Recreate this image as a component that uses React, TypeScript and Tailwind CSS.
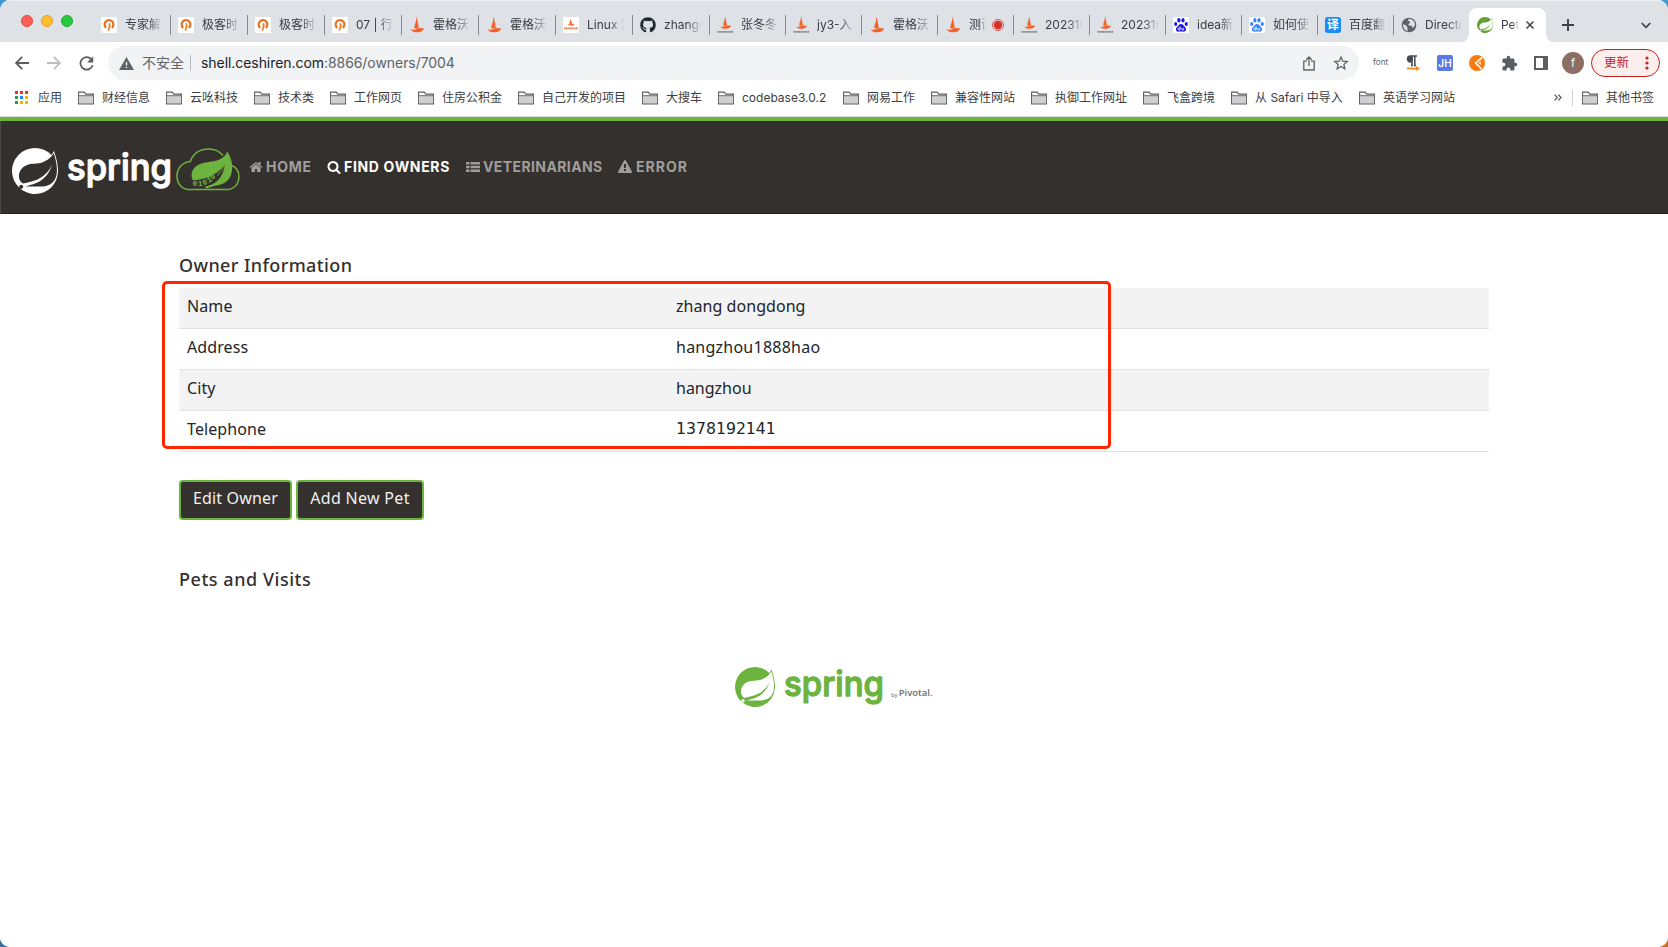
import React from 'react';
import { FaGithub } from 'react-icons/fa';
import { SiSpring } from 'react-icons/si';

const UI = "font-[Inter,'Noto_Sans_CJK_SC',sans-serif]";

/* ---------- favicons ---------- */

const GeekIcon = () => (
  <svg width="16" height="16" viewBox="0 0 16 16">
    <rect width="16" height="16" fill="#fff" />
    <path d="M5.200 10.900A4.400 4.400 0 1 1 10.800 10.900" fill="none" stroke="#ea6f1c" strokeWidth="2.200" />
    <path d="M7.600 6.200h1.900v4L8 13.800 6.400 13.200l1.200-2.600z" fill="#f07d22" />
  </svg>
);

const Ship = ({ caption = false }: { caption?: boolean }) => (
  <svg width="16" height="16" viewBox="0 0 16 16">
    <g transform={caption ? 'translate(2 -0.6) scale(.8)' : 'translate(0 -0.2)'}>
      <path d="M7.300.8C7.400 3.500 6.900 5.200 6 7.400c-.6 1.500-.9 3.100-.5 4.400l4.300-.1C9.800 8.500 8.800 6.500 8 .6z" fill="#f2622c" />
      <path d="M1.500 12.600c4 1 5-.2 8.200-1.200 1.800-.4 3.800.2 5.400.4-.8 2.200-3 3.600-6.200 3.700-3.600.1-6-.9-7.400-2.900z" fill="#f2622c" />
    </g>
    {caption && <path d="M.5 14.900h15.500" stroke="#777d84" strokeWidth="1.600" strokeDasharray="1.300 .5" />}
  </svg>
);

const LinuxShip = () => (
  <svg width="16" height="16" viewBox="0 0 16 16">
    <rect width="16" height="16" fill="#fff" />
    <path d="M7.500 2 6.300 7h3zM4.500 7.200c2 .6 4-.6 7 .1-1 1.700-5.500 2-7-.1z" fill="#f2622c" />
    <path d="M1 11.300h14" stroke="#f0764a" strokeWidth="1.800" strokeDasharray="1.400 .3" />
  </svg>
);

const Paw = ({ color }: { color: string }) => (
  <svg width="16" height="16" viewBox="0 0 16 16">
    <rect width="16" height="16" rx="1.500" fill="#fff" />
    <g fill={color}>
      <ellipse cx="2.700" cy="7" rx="1.600" ry="2.100" />
      <ellipse cx="5.900" cy="3.300" rx="1.600" ry="2.200" />
      <ellipse cx="10" cy="3.300" rx="1.600" ry="2.200" />
      <ellipse cx="13.300" cy="7" rx="1.600" ry="2.100" />
      <path d="M8 7c1.900 0 2.600 1.900 4 3.100 1.700 1.500 1.300 4.700-1.300 4.700-1 0-1.700-.2-2.700-.2s-1.800.2-2.800.2c-2.500 0-3-3.200-1.200-4.700C5.500 8.900 6.200 7 8 7z" />
    </g>
    <path d="M7.200 9.500v3.400H5.900a.9.900 0 0 1 0-2h1.300M8.800 10.900v1.400c0 .500.300.700.700.700h1.100v-2.100" fill="none" stroke="#fff" strokeWidth=".8" />
  </svg>
);

const Translate = () => (
  <span className="flex h-4 w-4 items-center justify-center rounded-[3px] bg-[#1889f7] text-[12px] leading-none font-bold text-white">
    译
  </span>
);

const Globe = () => (
  <svg width="16" height="16" viewBox="0 0 24 24">
    <circle cx="12" cy="12" r="11" fill="#5f6368" />
    <path
      d="M3 11c2 .2 3.500 1 5 2.500 1.500 1.200 2 2 1.500 3.500-.3 1.500.5 2.500 1 4.300C6 20.500 2.800 16.500 3 11zM11 3.200c-.5 2 .2 3 2 3.600 1.500.7 1 2.200-.5 3-1.300.6-1.600 1.600-.8 2.500 1 .9 2.800.4 4.500 1.200 1.500.8 1 2.500.3 3.500 3-1.200 4.800-4 4.300-7.200-.8-3.500-4.600-7.400-9.800-6.600z"
      fill="#dee1e6"
    />
  </svg>
);

/* ---------- tab strip ---------- */

type Tab = { title: string; icon: React.ReactNode; rec?: boolean };

const WIDE_TABS: Tab[] = [
  { title: '专家解', icon: <GeekIcon /> },
  { title: '极客时', icon: <GeekIcon /> },
  { title: '极客时', icon: <GeekIcon /> },
  { title: '07 | 行', icon: <GeekIcon /> },
  { title: '霍格沃', icon: <Ship /> },
  { title: '霍格沃', icon: <Ship /> },
  { title: 'Linux 常', icon: <LinuxShip /> },
  { title: 'zhangd', icon: <FaGithub size={16} color="#24292f" /> },
];

const NARROW_TABS: Tab[] = [
  { title: '张冬冬', icon: <Ship caption /> },
  { title: 'jy3-入', icon: <Ship caption /> },
  { title: '霍格沃', icon: <Ship /> },
  { title: '测试', icon: <Ship />, rec: true },
  { title: '202310', icon: <Ship caption /> },
  { title: '202310', icon: <Ship caption /> },
  { title: 'idea新', icon: <Paw color="#2319dc" /> },
  { title: '如何使', icon: <Paw color="#3385ff" /> },
  { title: '百度翻', icon: <Translate /> },
];

const LAST_TAB: Tab = { title: 'Directo', icon: <Globe /> };

const TabCell = ({ tab, className, sep = true }: { tab: Tab; className: string; sep?: boolean }) => (
  <div className={`flex h-full shrink-0 items-center pl-[7px] ${className}`}>
    <span className="flex h-4 w-4 shrink-0">{tab.icon}</span>
    <span
      className={`ml-2 overflow-hidden text-[12px] leading-5 whitespace-nowrap [mask-image:linear-gradient(to_right,black_62%,transparent_102%)] ${
        tab.rec ? 'w-[17px]' : 'w-[37px]'
      }`}
    >
      {tab.title}
    </span>
    {tab.rec && (
      <svg width="12" height="12" viewBox="0 0 12 12" className="ml-[6px] shrink-0">
        <circle cx="6" cy="6" r="4.200" fill="#d93025" />
        <circle cx="6" cy="6" r="5.500" fill="none" stroke="#d93025" strokeWidth=".8" />
      </svg>
    )}
    {sep && <span className="ml-auto h-5 w-px bg-[#85888d]" />}
  </div>
);

const TabStrip = () => (
  <div className="flex h-[42px] items-end border-t border-[#eceef1] bg-[#dee1e6] text-[#3c4043]">
    <div className="flex h-[41px] w-[94px] shrink-0 gap-2 pt-[14px] pl-[21px]">
      <span className="h-3 w-3 rounded-full border border-[#e2463d] bg-[#fe5f57]" />
      <span className="h-3 w-3 rounded-full border border-[#e0a024] bg-[#febc2e]" />
      <span className="h-3 w-3 rounded-full border border-[#1aad2e] bg-[#28c840]" />
    </div>
    <div className="flex h-[34px] shrink-0">
      {WIDE_TABS.map((t, i) => (
        <TabCell key={i} tab={t} className="w-[77px]" />
      ))}
      {NARROW_TABS.map((t, i) => (
        <TabCell key={i} tab={t} className="w-[76px]" />
      ))}
      <TabCell tab={LAST_TAB} className="w-[75px]" sep={false} />
      <div className="relative flex w-[77px] items-center rounded-t-[8px] bg-white pl-2">
        <svg width="8" height="8" className="absolute bottom-0 -left-2">
          <path d="M8 0v8H0a8 8 0 0 0 8-8z" fill="#fff" />
        </svg>
        <svg width="8" height="8" className="absolute -right-2 bottom-0">
          <path d="M0 0v8h8a8 8 0 0 1-8-8z" fill="#fff" />
        </svg>
        <SiSpring size={16} color="#5fa134" />
        <span className="ml-2 w-[18px] overflow-hidden text-[12px] leading-5 whitespace-nowrap [mask-image:linear-gradient(to_right,black_60%,transparent_102%)]">
          Pet
        </span>
        <svg width="8" height="8" viewBox="0 0 8 8" className="ml-[7px]">
          <path d="M.5.5l7 7m0-7l-7 7" stroke="#3c4043" strokeWidth="1.500" />
        </svg>
      </div>
      <div className="flex flex-1 items-center">
        <svg width="12" height="12" viewBox="0 0 12 12" className="ml-4">
          <path d="M6 0v12M0 6h12" stroke="#3c4043" strokeWidth="1.900" />
        </svg>
      </div>
    </div>
    <div className="flex h-[34px] flex-1 items-center justify-end pr-[17px]">
      <svg width="10" height="7" viewBox="0 0 10 7">
        <path d="M.700 1l4.300 4.300L9.300 1" fill="none" stroke="#3c4043" strokeWidth="1.700" />
      </svg>
    </div>
  </div>
);

/* ---------- address bar ---------- */

const AddressBar = () => (
  <div className="flex h-[42px] items-center bg-white pr-[7px] text-[#5f6368]">
    <svg width="14" height="14" viewBox="0 0 14 14" className="ml-[15px] shrink-0">
      <path d="M14 7H1.500M7.200.8L1 7l6.200 6.200" fill="none" stroke="#5a5e63" strokeWidth="1.800" />
    </svg>
    <svg width="14" height="14" viewBox="0 0 14 14" className="ml-[18px] shrink-0">
      <path d="M0 7h12.500M6.800.8L13 7l-6.200 6.200" fill="none" stroke="#bdbfc2" strokeWidth="1.800" />
    </svg>
    <svg width="15" height="15" viewBox="0 0 15 15" className="ml-[18px] shrink-0">
      <path d="M12.300 3.200A6.200 6.200 0 1 0 13.600 9.200" fill="none" stroke="#5a5e63" strokeWidth="1.800" />
      <path d="M14.200.300v6.200H8z" fill="#5a5e63" />
    </svg>

    <div className="ml-[14px] flex h-[34px] w-[1251px] shrink-0 items-center rounded-full bg-[#f1f3f4] pr-[10px] pl-[11px]">
      <svg width="15" height="13" viewBox="0 0 15 13">
        <path d="M7.500 0L15 13H0z" fill="#5f6368" />
        <path d="M6.800 5h1.400v3.500H6.800zM6.800 9.700h1.400v1.400H6.800z" fill="#f1f3f4" />
      </svg>
      <span className="ml-2 text-[14px] leading-5">不安全</span>
      <span className="ml-[6px] h-4 w-px bg-[#b6b8bb]" />
      <span className="ml-[10px] text-[14px] leading-5 tracking-[-0.060px]">
        <span className="text-[#202124]">shell.ceshiren.com</span>:8866/owners/7004
      </span>
      <svg width="12" height="15" viewBox="0 0 12 15" className="ml-auto">
        <path d="M4 5.200H.8v8.800h10.400V5.200H8M6 10V1.300M3.200 3.800L6 1l2.800 2.800" fill="none" stroke="#5f6368" strokeWidth="1.300" />
      </svg>
      <svg width="16" height="16" viewBox="0 0 24 24" className="ml-[18px]">
        <path
          d="M12 3l2.700 6.200 6.700.600-5.100 4.400 1.500 6.600L12 17.300l-5.800 3.500 1.500-6.600L2.600 9.800l6.700-.600z"
          fill="none"
          stroke="#5f6368"
          strokeWidth="1.900"
        />
      </svg>
    </div>

    <div className="ml-[14px] flex flex-1 items-center">
      <span className="w-4 shrink-0 -translate-y-px text-[8.200px] leading-3">font</span>
      <svg width="14" height="16" viewBox="0 0 14 16" className="ml-[17px] shrink-0">
        <path d="M11 1H4.500a3 3 0 0 0 0 6H6v4M6 1v10M8.800 1v10M5 10.600h2M8 10.600h2" fill="none" stroke="#454a54" strokeWidth="1.500" />
        <circle cx="4.300" cy="4" r="2.800" fill="#454a54" />
        <path d="M1 13.500h9.500" stroke="#f5871f" strokeWidth="1.800" />
        <path d="M10 11l4 2.500-4 2.500z" fill="#f5871f" />
      </svg>
      <span className="ml-[17px] flex h-4 w-4 shrink-0 items-center justify-center rounded-[2px] bg-[#5b78e5] text-[10px] leading-none font-semibold text-white">
        JH
      </span>
      <svg width="16" height="16" viewBox="0 0 16 16" className="ml-4 shrink-0">
        <circle cx="8" cy="8" r="8" fill="#fd7a10" />
        <path d="M13.300 2.400L6.600 8l5.800 5.700" fill="none" stroke="#fff" strokeWidth="1.600" />
        <path d="M11.700 6v4L9.500 8z" fill="#fff" />
      </svg>
      <svg width="17" height="17" viewBox="0 0 24 24" className="ml-[16px] shrink-0">
        <path
          d="M20.500 11H19V7a2 2 0 0 0-2-2h-4V3.500a2.500 2.500 0 0 0-5 0V5H4a2 2 0 0 0-2 2v3.800h1.500a2.700 2.700 0 0 1 0 5.400H2V20a2 2 0 0 0 2 2h3.800v-1.500a2.700 2.700 0 0 1 5.400 0V22H17a2 2 0 0 0 2-2v-4h1.500a2.500 2.500 0 0 0 0-5z"
          fill="#5a5e63"
        />
      </svg>
      <svg width="14" height="14" viewBox="0 0 14 14" className="ml-4 shrink-0">
        <path d="M1 1h12v12H1z" fill="none" stroke="#5a5e63" strokeWidth="2" />
        <path d="M9 1h4v12H9z" fill="#5a5e63" />
      </svg>
      <span className="ml-[14px] flex h-[22px] w-[22px] shrink-0 items-center justify-center rounded-full bg-[#8d6e63] text-[11px] leading-none text-white">
        f
      </span>
      <div className="ml-[7px] flex h-[28px] w-[69px] shrink-0 items-center rounded-full border border-[#c5221f] bg-[#fceeed] pl-3 text-[12.500px] text-[#c5221f]">
        更新
        <svg width="4" height="14" viewBox="0 0 4 14" className="ml-[16px]">
          <g fill="#c5221f">
            <circle cx="2" cy="2" r="1.600" />
            <circle cx="2" cy="7" r="1.600" />
            <circle cx="2" cy="12" r="1.600" />
          </g>
        </svg>
      </div>
    </div>
  </div>
);

/* ---------- bookmarks ---------- */

const Folder = () => (
  <svg width="16" height="14" viewBox="0 0 16 14" className="shrink-0">
    <path d="M.600 12.900V1.100h5.600l1.600 2h7.600v9.800z" fill="#fff" stroke="#5a5e63" strokeWidth="1.100" />
    <path d="M1.200 5h13.600v7.300H1.200z" fill="#cfcfcf" />
    <path d="M.6 4.700h14.800" stroke="#5a5e63" strokeWidth=".9" />
  </svg>
);

const BOOKMARKS: [string, string][] = [
  ['财经信息', 'w-[88px]'],
  ['云吆科技', 'w-[88px]'],
  ['技术类', 'w-[76px]'],
  ['工作网页', 'w-[88px]'],
  ['住房公积金', 'w-[100px]'],
  ['自己开发的项目', 'w-[124px]'],
  ['大搜车', 'w-[76px]'],
  ['codebase3.0.2', 'w-[125px]'],
  ['网易工作', 'w-[88px]'],
  ['兼容性网站', 'w-[100px]'],
  ['执御工作网址', 'w-[112px]'],
  ['飞盒跨境', 'w-[88px]'],
  ['从 Safari 中导入', 'w-[128px]'],
  ['英语学习网站', 'w-[112px]'],
];

const DOT_FILL = ['#e8352c', '#e8352c', '#e8352c', '#2c9b4e', '#1a86f8', '#f4b400', '#2c9b4e', '#f4b400', '#f4b400'];

const Bookmarks = () => (
  <div className="flex h-[32px] items-center bg-white pb-[5px] text-[12px] leading-4 text-[#3c4043]">
    <svg width="13" height="13" viewBox="0 0 13 13" className="ml-[15px] shrink-0">
      {DOT_FILL.map((fill, i) => (
        <rect key={i} x={(i % 3) * 5} y={Math.floor(i / 3) * 5} width="3" height="3" fill={fill} />
      ))}
    </svg>
    <span className="ml-[10px] w-[40px] shrink-0">应用</span>
    {BOOKMARKS.map(([name, w]) => (
      <span key={name} className={`flex shrink-0 items-center gap-2 whitespace-nowrap ${w}`}>
        <Folder />
        {name}
      </span>
    ))}
    <svg width="8" height="7" viewBox="0 0 8 7" className="ml-auto">
      <path d="M.6.600l2.700 2.900-2.700 2.900M4.400.600l2.700 2.900-2.700 2.900" fill="none" stroke="#5a5e63" strokeWidth="1.300" />
    </svg>
    <span className="ml-[10px] h-4 w-px bg-[#cdcfd2]" />
    <span className="ml-[9px] flex w-[86px] items-center gap-2">
      <Folder />
      其他书签
    </span>
  </div>
);

/* ---------- site header ---------- */

type WordmarkProps = { width: number; height: number; size: number; fill: string; base: number };

const Wordmark = ({ width, height, size, fill, base }: WordmarkProps) => (
  <svg width={width} height={height} className="shrink-0 overflow-visible">
    <text
      x="-1"
      y={base}
      textLength={width + 2}
      lengthAdjust="spacingAndGlyphs"
      fontFamily="Inter, sans-serif"
      fontWeight="500"
      fontSize={size}
      fill={fill}
      stroke={fill}
      strokeWidth="1.300"
      strokeLinejoin="round"
    >
      spring
    </text>
  </svg>
);

const CloudLogo = () => (
  <svg width="64" height="43" viewBox="0 0 64 43" className="ml-[5px] shrink-0">
    <path
      d="M14.200 41.600C5.500 41.600 1 35.800 1 27.800c0-8 5.600-13.600 13.300-14.400C17.200 5.600 24 .9 32.500.9c6.200 0 11.200 2.500 14.600 6.600M53.500 16.800c5.500 1.400 9.400 5.600 9.400 11.800 0 8.200-5.300 13-13.400 13H14.200"
      fill="none"
      stroke="#6db33f"
      strokeWidth="1.500"
    />
    <path
      d="M51.300 3.500c-2 5.300-6.200 8.100-12.600 9.500-6.700 1.400-12.200 1.400-17 4.200-5.900 3.400-7.300 9-5.200 14.600 1 1.600 2 2.200 4 1.900-1 1.800 3 3.800 9 4.200 10 1.200 21.700-.8 25.400-10.600 2.600-7.800 1.300-16.100-3.600-23.800z"
      fill="#6db33f"
    />
    <path d="M14 32.500C28 32 40 28 48.800 17 47 30 40 36.500 28 39.500 22 41 14 40 14 32.500z" fill="#34302d" />
    <text
      fontFamily="'Liberation Mono', monospace"
      fontWeight="700"
      fontSize="8"
      fill="#6db33f"
      x="16.500 22 27.200 32.400 36.600"
      y="38.400 38.200 37.200 35 32"
      rotate="0 -6 -18 -32 -42"
    >
      01010
    </text>
    <path d="M41.500 27C44 24.600 46 22 47.600 19" fill="none" stroke="#6db33f" strokeWidth="2" strokeDasharray=".8 1.100" />
    <path d="M29.500 39.500C36 38.500 43 35 47 29" fill="none" stroke="#6db33f" strokeWidth="1.800" />
  </svg>
);

const Fa = ({ d }: { d: string }) => (
  <svg width="14" height="14" viewBox="0 0 1792 1792" fill="currentColor" className="shrink-0">
    <path d={d} />
  </svg>
);

const HOME =
  'M1472 992v480q0 26-19 45t-45 19h-384v-384H768v384H384q-26 0-45-19t-19-45V992q0-1 .5-3t.5-3l575-474 575 474q1 2 1 6zm223-69l-62 74q-8 9-21 11h-3q-13 0-21-7L896 424l-692 577q-12 8-24 7-13-2-21-11l-62-74q-8-10-7-23.500t11-21.500l719-599q32-26 76-26t76 26l244 204V288q0-14 9-23t23-9h192q14 0 23 9t9 23v408l219 182q10 8 11 21.500t-7 23.500z';
const SEARCH =
  'M1216 832q0-185-131.500-316.500T768 384 451.500 515.500 320 832t131.500 316.500T768 1280t316.500-131.500T1216 832zm512 832q0 52-38 90t-90 38q-54 0-90-38l-343-342q-179 124-399 124-143 0-273.500-55.500t-225-150-150-225T64 832t55.500-273.500 150-225 225-150T768 128t273.500 55.500 225 150 150 225T1472 832q0 220-124 399l343 343q37 37 37 90z';
const LIST =
  'M0 256h448v320H0zM576 256h1216v320H576zM0 736h448v320H0zM576 736h1216v320H576zM0 1216h448v320H0zM576 1216h1216v320H576z';
const WARN =
  'M1024 1375v-190q0-14-9.500-23.500t-22.500-9.500H800q-13 0-22.500 9.500t-9.500 23.500v190q0 14 9.500 23.500t22.500 9.500h192q13 0 22.500-9.500t9.500-23.500zm-2-374l18-459q0-12-10-19-13-11-24-11H786q-11 0-24 11-10 7-10 21l17 457q0 10 10 16.500t24 6.500h185q14 0 23.500-6.500t10.500-16.500zm-14-934l768 1408q35 63-2 126-17 29-46.500 46t-63.500 17H128q-34 0-63.500-17T18 1601q-37-63-2-126L784 67q17-31 47-49t65-18 65 18 47 49z';

const Header = () => (
  <header className="flex h-[97px] items-start border-t-4 border-[#6db33f] bg-[#34302d] shadow-[inset_1px_0_0_#4a4745,inset_0_-1px_0_#2a2321]">
    <SiSpring size={46} color="#fff" className="mt-[27px] ml-[12px] shrink-0" />
    <div className="mt-[27px] ml-[10px] flex">
      <Wordmark width={103} height={46} size={37} fill="#fff" base={32} />
      <CloudLogo />
    </div>
    <nav className="mt-[36px] ml-[9px] flex h-[19px] items-center text-[14px] leading-[19px] font-bold text-[#a09e9c]">
      <span className="flex w-[78px] items-center">
        <Fa d={HOME} />
        <span className="ml-[3px] tracking-[0.700px]">HOME</span>
      </span>
      <span className="flex w-[139px] items-center text-white">
        <Fa d={SEARCH} />
        <span className="ml-[3px] tracking-[0.660px] whitespace-nowrap">FIND OWNERS</span>
      </span>
      <span className="flex w-[152px] items-center">
        <Fa d={LIST} />
        <span className="ml-[3px] tracking-[0.400px]">VETERINARIANS</span>
      </span>
      <span className="flex items-center">
        <Fa d={WARN} />
        <span className="ml-[4px] tracking-[1px]">ERROR</span>
      </span>
    </nav>
  </header>
);

/* ---------- page ---------- */

const ROWS: [string, string, string][] = [
  ['Name', 'zhang dongdong', 'tracking-[0.050px]'],
  ['Address', 'hangzhou1888hao', 'tracking-[0.240px]'],
  ['City', 'hangzhou', ''],
  ['Telephone', '1378192141', "font-['DejaVu_Sans',sans-serif] text-[15.700px]"],
];

const Heading = ({ children, className = '' }: { children: React.ReactNode; className?: string }) => (
  <h2 className={`text-[18px] leading-[22px] font-medium text-[#34302d] ${className}`}>{children}</h2>
);

const Button = ({ children, className }: { children: React.ReactNode; className: string }) => (
  <button className={`h-10 rounded-[4px] border-2 border-[#6db33f] bg-[#34302d] pb-[5px] text-[16px] leading-6 whitespace-nowrap text-[#f1f1f1] ${className}`}>
    {children}
  </button>
);

const Page = () => (
  <main className="flex flex-1 flex-col bg-white px-[179px] pt-[40px] font-['Noto_Sans',sans-serif]">
    <div className="h-[34px]">
      <Heading className="tracking-[0.400px]">Owner Information</Heading>
    </div>
    <div className="relative">
      <table className="w-[1310px] border-separate border-spacing-0 text-[16px] leading-6 text-[#212529]">
        <tbody>
          {ROWS.map(([k, v, c], i) => (
            <tr key={k} className={`h-[41px] ${i % 2 === 0 ? 'bg-[#f3f3f3]' : 'bg-white'}`}>
              <td className="w-[489px] border-b border-[#dee2e6] p-0 pb-[5px] pl-2">
                <span className="tracking-[0.100px]">{k}</span>
              </td>
              <td className="border-b border-[#dee2e6] p-0 pb-[5px] pl-2">
                <span className={c}>{v}</span>
              </td>
            </tr>
          ))}
        </tbody>
      </table>
      <div className="absolute -top-[7px] -left-[17px] h-[168px] w-[949px] rounded-[5px] border-[3px] border-[#ff2600]" />
    </div>
    <div className="mt-[28px] flex gap-1">
      <Button className="w-[113px] tracking-[0.150px]">Edit Owner</Button>
      <Button className="w-[128px] tracking-[0.300px]">Add New Pet</Button>
    </div>
    <div className="mt-[48px]">
      <Heading className="tracking-[0.540px]">Pets and Visits</Heading>
    </div>
    <div className="mt-[77px] ml-[556px] flex h-[39px] items-center">
      <SiSpring size={40} color="#6db33f" className="shrink-0" />
      <div className="ml-[10px] flex">
        <Wordmark width={98} height={39} size={35} fill="#6db33f" base={29} />
      </div>
      <span className="mt-[13px] ml-[8px] flex items-center text-[#6d6e71]">
        <span className="mt-[3px] mr-[1px] text-[6px] leading-[8px]">by</span>
        <span className="font-['Open_Sans',sans-serif] text-[9.500px] leading-3 font-semibold">Pivotal.</span>
      </span>
    </div>
  </main>
);

export default function App() {
  return (
    <div className="h-[947px] w-[1668px] bg-[linear-gradient(to_bottom,#3f97d3_50%,transparent_50%),linear-gradient(to_right,#3a6fa8_50%,#c9701f_50%)]">
      <div className={`flex h-full flex-col overflow-hidden rounded-[10px] bg-white ${UI}`}>
        <TabStrip />
        <AddressBar />
        <Bookmarks />
        <div className="h-px bg-[#d5d9de]" />
        <Header />
        <Page />
      </div>
    </div>
  );
}
